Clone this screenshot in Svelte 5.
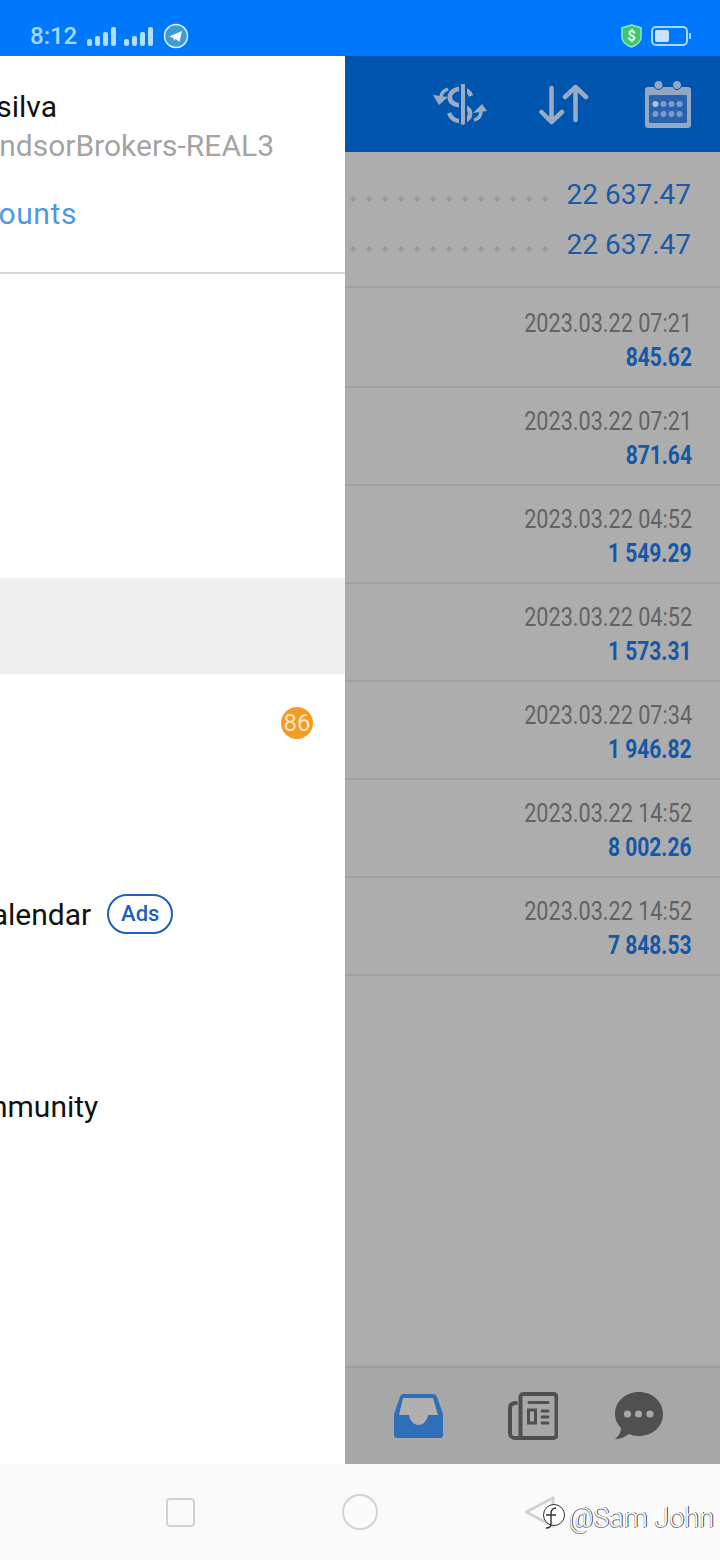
<script lang="ts">
    const menu = [
        { label: "Quotes" },
        { label: "Charts" },
        { label: "Trade" },
        { label: "History", active: true },
        { label: "Mailbox", badge: "86" },
        { label: "News" },
        { label: "Economic calendar", ads: true },
        { label: "Journal" },
        { label: "Traders Community" },
        { label: "Settings" },
    ];

    const deals = [
        { time: "2023.03.22 07:21", amount: "845.62" },
        { time: "2023.03.22 07:21", amount: "871.64" },
        { time: "2023.03.22 04:52", amount: "1 549.29" },
        { time: "2023.03.22 04:52", amount: "1 573.31" },
        { time: "2023.03.22 07:34", amount: "1 946.82" },
        { time: "2023.03.22 14:52", amount: "8 002.26" },
        { time: "2023.03.22 14:52", amount: "7 848.53" },
    ];

    const signalBars = [7, 10, 14, 19];
</script>

<main>
    <header class="status">
        <span class="clock">8:12</span>
        {#each [0, 1] as group}
            <span class="signal" class:second={group === 1}>
                {#each signalBars as h}
                    <i style="height: {h}px"></i>
                {/each}
            </span>
        {/each}
        <svg class="telegram" width="26" height="26" viewBox="0 0 26 26">
            <circle cx="13" cy="13" r="11.5" fill="#3f9ad6" stroke="#d8f0ff" stroke-width="1.5" />
            <path d="M6 13.5 L19 8 L16.5 19 L12.5 16 L11 18 L10.5 15 Z" fill="#f2f8fc" />
        </svg>
        <span class="spacer"></span>
        <svg class="shield" width="21" height="24" viewBox="0 0 22 25">
            <path d="M11 1 L21 4 V14 C21 19 16 22 11 24 C6 22 1 19 1 14 V4 Z" fill="#41c46a" stroke="#86e8dc" stroke-width="1.5" />
            <text x="11" y="17.5" text-anchor="middle" class="shield-text">$</text>
        </svg>
        <span class="battery"><i></i></span>
    </header>

    <div class="middle">
        <nav class="drawer">
            <div class="account">
                <div class="line name"><span>Carlos Eduardo silva</span></div>
                <div class="line server"><span>12345678 - WindsorBrokers-REAL3</span></div>
                <div class="line manage"><span>Manage accounts</span></div>
            </div>
            <ul>
                {#each menu as item}
                    <li class:active={item.active}>
                        <span class="label">{item.label}</span>
                        {#if item.ads}
                            <span class="ads">Ads</span>
                        {/if}
                        {#if item.badge}
                            <span class="badge">{item.badge}</span>
                        {/if}
                    </li>
                {/each}
            </ul>
        </nav>

        <section class="content">
            <div class="toolbar">
                <svg class="t1" width="54" height="41" viewBox="0 0 54 41" fill="none" stroke="#9aabc4">
                    <path d="M38 12 C36 6 30 5 27 5 C20 5 16 10 17 15 C18 20 24 21 29 22 C34 23 38 26 37 31 C36 36 30 38 27 37 C22 37 18 34 16 29" stroke-width="4.5" />
                    <path d="M30 1 V39" stroke="#0055ae" stroke-width="8" />
                    <path d="M30 1 V39" stroke-width="4" stroke-linecap="round" />
                    <path d="M15 5 C10 7 8 9 8 14" stroke-width="3.5" />
                    <path d="M0 11 L15 13 L6 21 Z" fill="#9aabc4" stroke="none" />
                    <path d="M41 36 C46 35 48 32 48 27" stroke-width="3.5" />
                    <path d="M40 29 L54 27 L49 20 Z" fill="#9aabc4" stroke="none" />
                </svg>
                <svg class="t2" width="50" height="41" viewBox="0 0 50 41" fill="none" stroke="#9aabc4" stroke-width="4.5" stroke-linecap="round" stroke-linejoin="round">
                    <path d="M12.5 4 V38 M2.5 28 L12.5 38 L23 28" />
                    <path d="M36.5 3 V36 M26 13 L36.5 3 L47 13" />
                </svg>
                <svg class="t3" width="46" height="48" viewBox="0 0 46 48">
                    <rect x="0" y="7" width="46" height="41" rx="3" fill="#94a6c0" />
                    <rect x="4" y="15" width="38" height="28" rx="1" fill="#2b62ad" />
                    <circle cx="13.5" cy="5" r="4.5" fill="#94a6c0" stroke="#0055ae" stroke-width="1" />
                    <circle cx="32" cy="5" r="4.5" fill="#94a6c0" stroke="#0055ae" stroke-width="1" />
                    {#each [24, 34] as y}
                        {#each [10.5, 18.5, 26.5, 34.5] as x}
                            <circle cx={x} cy={y} r="3" fill={x === 10.5 && y === 24 ? "#b4c1d6" : "#7a9bc8"} />
                        {/each}
                    {/each}
                </svg>
            </div>

            <div class="summary">
                <div class="sum-row"><span class="dots"></span><span class="value">22 637.47</span></div>
                <div class="sum-row"><span class="dots"></span><span class="value">22 637.47</span></div>
            </div>

            <div class="deals">
                {#each deals as deal}
                    <div class="deal">
                        <span class="time">{deal.time}</span>
                        <span class="amount">{deal.amount}</span>
                    </div>
                {/each}
            </div>

            <div class="tabs">
                <svg width="49" height="44" viewBox="0 0 49 44">
                    <path d="M9 0 H39 Q42 0 43 3 L49 20 V41 Q49 44 46 44 H3 Q0 44 0 41 V20 L6 3 Q7 0 9 0 Z" fill="#2f6fba" />
                    <path d="M9 4 H39 L44 21 H34 C33 27 29 31 24.5 31 C20 31 16 27 15 21 H5 Z" fill="#b0b0b0" />
                </svg>
                <svg width="50" height="48" viewBox="0 0 50 48" fill="none" stroke="#505050" stroke-linecap="round">
                    <rect x="12.5" y="2" width="36" height="44" rx="3" stroke-width="4" />
                    <path d="M8 11 C4 11 2 13 2 16 V41 C2 45 4 46 8 46 H14" stroke-width="4" />
                    <path d="M21 10.5 H40" stroke-width="3" />
                    <rect x="20.5" y="18" width="7" height="13" stroke-width="3" />
                    <path d="M34 19 H40 M34 25 H40 M34 31 H40" stroke-width="3" />
                </svg>
                <svg width="48" height="48" viewBox="0 0 48 48">
                    <path d="M24 0 C37 0 48 9 48 22 C48 35 37 44 24 44 C20 44 16 43 14 42 C10 45 5 47 0 47 C4 44 6 40 6 36 C2 32 0 27 0 22 C0 9 11 0 24 0 Z" fill="#505050" />
                    <circle cx="12.5" cy="22" r="3.6" fill="#a8a8a8" />
                    <circle cx="23.5" cy="22" r="3.6" fill="#a8a8a8" />
                    <circle cx="35" cy="22" r="3.6" fill="#a8a8a8" />
                </svg>
            </div>
        </section>
    </div>

    <footer class="navbar">
        <span class="btn"><i class="square"></i></span>
        <span class="btn"><i class="circle"></i></span>
        <span class="btn">
            <svg width="34" height="34" viewBox="0 0 34 34" fill="none">
                <path d="M30 3 L3 17 L30 31 Z" stroke="#d2d2d2" stroke-width="3" stroke-linejoin="round" />
            </svg>
        </span>
        <span class="watermark">
            <svg width="26" height="30" viewBox="0 0 26 30" fill="none" stroke="#333" stroke-width="1">
                <circle cx="12" cy="12" r="10.5" fill="#fff" />
                <path d="M14 5 C10 5 9 7 9 11 V21 C9 24 7 25 4 25 M4 12 H14" stroke-width="1.4" />
            </svg>
            @Sam John
        </span>
    </footer>
</main>

<style>
    :global(body) {
        margin: 0;
        font-family: Roboto, sans-serif;
    }

    main {
        position: relative;
        display: flex;
        flex-direction: column;
        width: 720px;
        height: 1560px;
        overflow: hidden;
        background: #adadad;
    }

    .status {
        display: flex;
        align-items: center;
        height: 56px;
        padding: 16px 30px 0;
        box-sizing: border-box;
        background: #0078fe;
        flex-shrink: 0;
    }

    .clock {
        font-size: 24px;
        font-weight: 500;
        color: #a6d8ff;
        margin-right: 10px;
    }

    .signal {
        display: flex;
        align-items: flex-end;
        gap: 3px;
        height: 20px;
    }

    .signal.second {
        margin-left: 8px;
    }

    .signal i {
        display: block;
        width: 5px;
        background: #b0deff;
        border-radius: 2px;
    }

    .telegram {
        margin-left: 10px;
    }

    .spacer {
        flex: 1;
    }

    .shield-text {
        font-size: 15px;
        font-weight: 700;
        fill: #eafff2;
        font-family: Roboto, sans-serif;
    }

    .battery {
        position: relative;
        display: block;
        width: 37px;
        height: 20px;
        margin: 0 2px 0 9px;
        box-sizing: border-box;
        border: 2px solid #a6d8ff;
        border-radius: 5px;
    }

    .battery i {
        display: block;
        width: 14px;
        height: 12px;
        margin: 2px;
        background: #c8e2ff;
        border-radius: 2px;
    }

    .battery::after {
        content: "";
        position: absolute;
        right: -5px;
        top: 5px;
        width: 2px;
        height: 6px;
        background: #a6d8ff;
    }

    .middle {
        display: flex;
        flex: 1;
        min-height: 0;
    }

    .drawer {
        width: 345px;
        flex-shrink: 0;
        overflow: hidden;
        background: #fff;
    }

    .account {
        height: 218px;
        padding-top: 33px;
        box-sizing: border-box;
        border-bottom: 2px solid #d8d8d8;
    }

    /* the drawer is mid-slide: text runs off its left edge */
    .line {
        display: flex;
        justify-content: flex-end;
        white-space: nowrap;
        font-size: 30px;
        line-height: 36px;
    }

    .name {
        width: 57px;
        color: #111;
    }

    .server {
        width: 274px;
        margin-top: 3px;
        color: #a4a4a4;
    }

    .manage {
        width: 77px;
        margin-top: 32px;
        letter-spacing: 0.6px;
        color: #4c9be0;
    }

    ul {
        list-style: none;
        margin: 16px 0 0 -164px;
        padding: 0;
    }

    li {
        display: flex;
        align-items: center;
        height: 96px;
        padding-right: 32px;
        font-size: 30px;
        color: #111;
        white-space: nowrap;
    }

    li.active {
        background: #efefef;
    }

    .ads {
        box-sizing: border-box;
        width: 66px;
        height: 40px;
        margin-left: 16px;
        border: 2px solid #1f5fbd;
        border-radius: 20px;
        color: #1f5fbd;
        font-size: 22px;
        font-weight: 500;
        line-height: 36px;
        text-align: center;
    }

    .badge {
        width: 32px;
        height: 32px;
        margin: 2px 0 0 auto;
        border-radius: 50%;
        background: #f59b23;
        color: #fde4bf;
        font-size: 24px;
        line-height: 32px;
        text-align: center;
    }

    .content {
        display: flex;
        flex: 1;
        flex-direction: column;
        min-width: 0;
    }

    .toolbar {
        display: flex;
        align-items: center;
        justify-content: flex-end;
        height: 96px;
        padding-right: 29px;
        background: #0055ae;
    }

    .t1 {
        margin-right: 52px;
    }

    .t2 {
        margin-right: 56px;
    }

    .summary {
        height: 136px;
        box-sizing: border-box;
        padding-top: 17px;
        border-bottom: 2px solid #a0a0a0;
    }

    .sum-row {
        display: flex;
        align-items: center;
        height: 50px;
        padding-right: 29px;
    }

    .dots {
        flex: 1;
        height: 6px;
        margin: 10px 14px 0 0;
        background-image: radial-gradient(circle, #9a9a9a 2.4px, transparent 2.9px);
        background-size: 16px 6px;
        background-position: left center;
    }

    .value {
        font-size: 28px;
        color: #1a5aa6;
    }

    .deals {
        flex: 1;
        padding-top: 2px;
    }

    .deal {
        display: flex;
        flex-direction: column;
        align-items: flex-end;
        height: 98px;
        box-sizing: border-box;
        padding: 17px 28px 0 0;
        border-bottom: 2px solid #a0a0a0;
    }

    .time,
    .amount {
        display: block;
        font-size: 25px;
        line-height: 34px;
        white-space: nowrap;
        transform-origin: right center;
    }

    .time {
        color: #636363;
        transform: scaleX(0.865);
    }

    .amount {
        font-weight: 700;
        color: #1558a8;
        transform: scaleX(0.84);
    }

    .tabs {
        display: flex;
        align-items: center;
        justify-content: flex-end;
        height: 98px;
        box-sizing: border-box;
        padding-right: 57px;
        border-top: 2px solid #9c9c9c;
        background: #a7a7a7;
    }

    .tabs svg:first-child {
        margin-right: 65px;
    }

    .tabs svg:nth-child(2) {
        margin-right: 57px;
    }

    .navbar {
        display: flex;
        align-items: center;
        justify-content: center;
        gap: 140px;
        height: 96px;
        flex-shrink: 0;
        background: #fafafa;
    }

    .btn {
        display: flex;
        align-items: center;
        justify-content: center;
        width: 40px;
        height: 40px;
    }

    .square {
        display: block;
        box-sizing: border-box;
        width: 29px;
        height: 29px;
        border: 2px solid #d2d2d2;
        border-radius: 4px;
    }

    .circle {
        display: block;
        box-sizing: border-box;
        width: 36px;
        height: 36px;
        border: 2px solid #d2d2d2;
        border-radius: 50%;
    }

    .watermark {
        position: absolute;
        right: 6px;
        bottom: 26px;
        display: flex;
        align-items: center;
        gap: 1px;
        font-size: 27px;
        font-weight: 300;
        color: #fff;
        text-shadow: 1px 0 0 #444, -0.5px 0.5px 0 #888;
        white-space: nowrap;
    }
</style>
